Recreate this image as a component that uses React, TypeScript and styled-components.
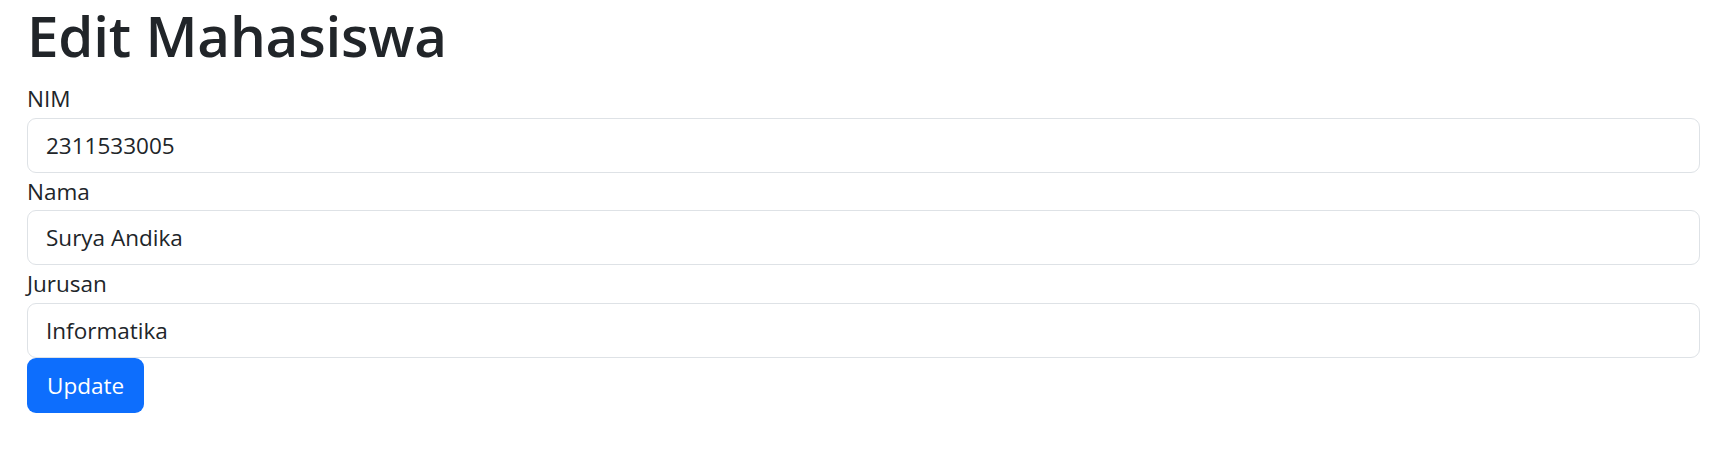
import React from "react";
import styled, { createGlobalStyle } from "styled-components";

const GlobalStyle = createGlobalStyle`
  html, body {
    margin: 0;
    padding: 0;
    background: #ffffff;
  }
  body {
    font-family: "Segoe UI", "Open Sans", "Noto Sans", sans-serif;
    color: #212529;
  }
`;

const Container = styled.div`
  width: 1673px;
  padding-left: 27px;
  display: flex;
  flex-direction: column;
`;

const Title = styled.h1`
  margin: 0 0 8px;
  font-size: 56.5px;
  line-height: 72px;
  font-weight: 600;
  color: #212529;
  letter-spacing: -0.2px;
`;

const Form = styled.form`
  display: flex;
  flex-direction: column;
`;

const Field = styled.div`
  display: flex;
  flex-direction: column;
`;

const Label = styled.label`
  font-size: 22.5px;
  line-height: 37.5px;
  color: #212529;
`;

const Input = styled.input`
  box-sizing: border-box;
  height: 55px;
  width: 100%;
  padding: 0 18px;
  border: 1px solid #dee2e6;
  border-radius: 9px;
  font-family: inherit;
  font-size: 22.5px;
  color: #212529;
  background: #ffffff;
  outline: none;
`;

const Button = styled.button`
  box-sizing: border-box;
  align-self: flex-start;
  height: 55px;
  padding: 0 20px;
  border: none;
  border-radius: 9px;
  background: #0d6efd;
  color: #ffffff;
  font-family: inherit;
  font-size: 22.5px;
  cursor: pointer;
`;

const fields = [
  { id: "nim", label: "NIM", value: "2311533005" },
  { id: "nama", label: "Nama", value: "Surya Andika" },
  { id: "jurusan", label: "Jurusan", value: "Informatika" },
];

export default function App() {
  return (
    <>
      <GlobalStyle />
      <Container>
        <Title>Edit Mahasiswa</Title>
        <Form onSubmit={(e) => e.preventDefault()}>
          {fields.map((f) => (
            <Field key={f.id}>
              <Label htmlFor={f.id}>{f.label}</Label>
              <Input id={f.id} defaultValue={f.value} />
            </Field>
          ))}
          <Button type="submit">Update</Button>
        </Form>
      </Container>
    </>
  );
}
